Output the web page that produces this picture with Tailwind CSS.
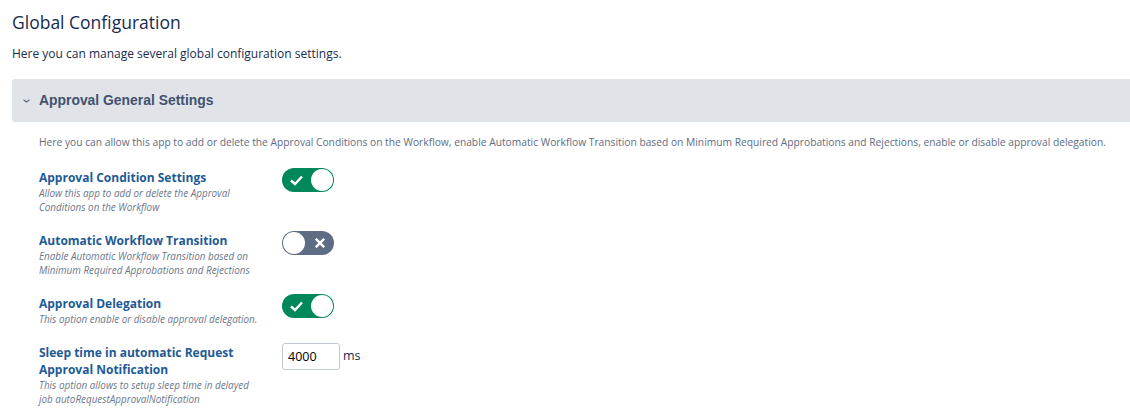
<!DOCTYPE html>
<html lang="en">
<head>
    <meta charset="UTF-8">
    <title>Global Configuration</title>
    <script src="https://cdn.jsdelivr.net/npm/@tailwindcss/browser@4"></script>
</head>
<body class="bg-white overflow-hidden font-['Open_Sans',sans-serif]">
    <div class="w-[1130px] h-[417px] overflow-hidden pl-3 pt-[10px]">
        <h1 class="text-[17.5px] leading-[24px] font-medium text-[#172b4d]">Global Configuration</h1>
        <p class="mt-[10px] text-[12px] leading-[20px] text-[#172b4d] whitespace-nowrap">Here you can manage several global configuration settings.</p>

        <div class="mt-[15px] w-[1130px] h-[43px] bg-[#e0e4e8] rounded-l-[3px] flex items-center">
            <svg class="ml-[11px] w-[7px] h-[4px]" viewBox="0 0 7 4" fill="none" stroke="#5e6c84" stroke-width="1.2"><path d="M0.5 0.8 3.5 3 6.5 0.8"/></svg>
            <h2 class="ml-[9px] text-[13.9px] font-bold text-[#42526e] font-['Liberation_Sans',sans-serif]">Approval General Settings</h2>
        </div>

        <p class="mt-[12px] ml-[27px] text-[10.25px] leading-[16px] text-[#5e6c84] whitespace-nowrap">Here you can allow this app to add or delete the Approval Conditions on the Workflow, enable Automatic Workflow Transition based on Minimum Required Approbations and Rejections, enable or disable approval delegation.</p>

        <div class="ml-[27px] mt-[18px] flex flex-col">
            <div class="flex h-[63px]">
                <div class="w-[243px] pt-px">
                    <h3 class="text-[12px] leading-[17px] font-bold text-[#1d5a96]">Approval Condition Settings</h3>
                    <p class="w-[215px] text-[9.9px] leading-[14px] italic text-[#6b778c]">Allow this app to add or delete the Approval Conditions on the Workflow</p>
                </div>
                <div class="w-[52px] h-[24px] rounded-full bg-[#00875a] relative flex items-center">
                    <svg class="ml-[7px] w-[15px] h-[14px]" viewBox="0 0 14 14" fill="none" stroke="#fff" stroke-width="2.4"><path d="M1.5 7.5 5.5 11 12.5 3.5"/></svg>
                    <span class="absolute right-[1px] top-[1px] w-[22px] h-[22px] rounded-full bg-white"></span>
                </div>
            </div>
            <div class="flex h-[63px]">
                <div class="w-[243px] pt-px">
                    <h3 class="text-[12px] leading-[17px] font-bold text-[#1d5a96]">Automatic Workflow Transition</h3>
                    <p class="w-[215px] text-[9.9px] leading-[14px] italic text-[#6b778c]">Enable Automatic Workflow Transition based on Minimum Required Approbations and Rejections</p>
                </div>
                <div class="w-[52px] h-[24px] rounded-full bg-[#5e6c84] relative flex items-center justify-end">
                    <span class="absolute left-[1px] top-[1px] w-[22px] h-[22px] rounded-full bg-white"></span>
                    <svg class="mr-[9px] w-[10px] h-[10px]" viewBox="0 0 10 10" fill="none" stroke="#fff" stroke-width="2.4"><path d="M0.8 0.8 9.2 9.2M9.2 0.8 0.8 9.2"/></svg>
                </div>
            </div>
            <div class="flex h-[49px]">
                <div class="w-[243px] pt-px">
                    <h3 class="text-[12px] leading-[17px] font-bold text-[#1d5a96]">Approval Delegation</h3>
                    <p class="text-[9.9px] leading-[14px] italic text-[#6b778c] whitespace-nowrap">This option enable or disable approval delegation.</p>
                </div>
                <div class="w-[52px] h-[24px] rounded-full bg-[#00875a] relative flex items-center">
                    <svg class="ml-[7px] w-[15px] h-[14px]" viewBox="0 0 14 14" fill="none" stroke="#fff" stroke-width="2.4"><path d="M1.5 7.5 5.5 11 12.5 3.5"/></svg>
                    <span class="absolute right-[1px] top-[1px] w-[22px] h-[22px] rounded-full bg-white"></span>
                </div>
            </div>
            <div class="flex">
                <div class="w-[243px] pt-px">
                    <h3 class="w-[215px] text-[12px] leading-[17px] font-bold text-[#1d5a96]">Sleep time in automatic Request Approval Notification</h3>
                    <p class="w-[215px] text-[9.9px] leading-[14px] italic text-[#6b778c]">This option allows to setup sleep time in delayed job autoRequestApprovalNotification</p>
                </div>
                <div class="flex items-start">
                    <input type="text" value="4000" class="w-[58px] h-[27px] px-[5px] border border-[#c1c7d0] rounded-[3px] text-[12.5px] text-black">
                    <span class="ml-[3px] mt-[4px] text-[12.5px] text-[#172b4d]">ms</span>
                </div>
            </div>
        </div>
    </div>
</body>
</html>
